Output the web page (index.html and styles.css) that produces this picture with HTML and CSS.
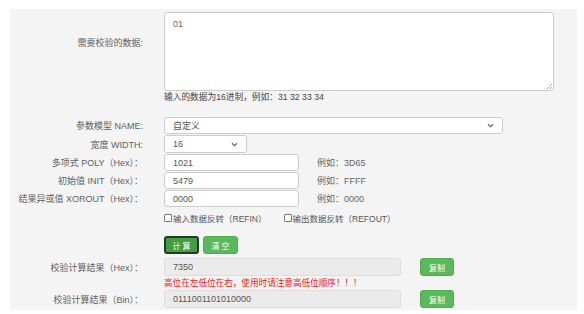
FILE: index.html
```html
<!DOCTYPE html>
<html lang="zh-CN">
<head>
    <meta charset="UTF-8">
    <title>CRC</title>
    <link rel="stylesheet" href="styles.css">
</head>
<body>
    <div class="panel">
        <div class="row row-data">
            <label class="lbl lbl-top">需要校验的数据:</label>
            <div class="field">
                <div class="textarea">01<span class="grip"></span></div>
                <div class="hint">输入的数据为16进制，例如：31 32 33 34</div>
            </div>
        </div>

        <div class="row row-name">
            <label class="lbl">参数模型 NAME:</label>
            <div class="select select-wide">自定义<svg width="7" height="5" viewBox="0 0 7 5"><path d="M1 1.2 L3.5 3.6 L6 1.2" fill="none" stroke="#666" stroke-width="1.2"/></svg></div>
        </div>
        <div class="row">
            <label class="lbl">宽度 WIDTH:</label>
            <div class="select select-small">16<svg width="7" height="5" viewBox="0 0 7 5"><path d="M1 1.2 L3.5 3.6 L6 1.2" fill="none" stroke="#666" stroke-width="1.2"/></svg></div>
        </div>
        <div class="row">
            <label class="lbl">多项式 POLY（Hex）：</label>
            <div class="input">1021</div>
            <span class="example">例如：3D65</span>
        </div>
        <div class="row">
            <label class="lbl">初始值 INIT（Hex）：</label>
            <div class="input">5479</div>
            <span class="example">例如：FFFF</span>
        </div>
        <div class="row">
            <label class="lbl">结果异或值 XOROUT（Hex）：</label>
            <div class="input">0000</div>
            <span class="example">例如：0000</span>
        </div>

        <div class="row row-checks">
            <span class="lbl"></span>
            <label class="check"><span class="box"></span>输入数据反转（REFIN）</label>
            <label class="check"><span class="box"></span>输出数据反转（REFOUT）</label>
        </div>

        <div class="row row-btns">
            <span class="lbl"></span>
            <button class="btn btn-active">计 算</button>
            <button class="btn">清 空</button>
        </div>

        <div class="row row-hex">
            <label class="lbl">校验计算结果（Hex）：</label>
            <div class="input result">7350</div>
            <button class="btn btn-copy">复制</button>
        </div>
        <div class="row row-warn">
            <span class="lbl"></span>
            <span class="warn">高位在左低位在右，使用时请注意高低位顺序！！！</span>
        </div>
        <div class="row row-bin">
            <label class="lbl">校验计算结果（Bin）：</label>
            <div class="input result">0111001101010000</div>
            <button class="btn btn-copy">复制</button>
        </div>
    </div>
</body>
</html>
```

FILE: styles.css
```css
*{
    margin: 0;
    padding: 0;
    box-sizing: border-box;
}
body{
    background-color: #fff;
    font-family: "Liberation Sans", "Noto Sans CJK SC", sans-serif;
    font-size: 9px;
    color: #555;
}
.panel{
    width: 567px;
    margin: 9px 0 0 10px;
    padding: 3px 0 2px 0;
    background-color: #f4f4f4;
}
.row{
    display: flex;
    align-items: center;
    margin-top: 1px;
}
.lbl{
    width: 154px;
    flex-shrink: 0;
    padding-right: 21px;
    text-align: right;
    color: #606060;
}
.lbl-top{
    align-self: flex-start;
    padding-top: 24px;
}
.row-data{
    margin-top: 0;
    align-items: flex-start;
}
.textarea{
    position: relative;
    width: 390px;
    height: 79px;
    padding: 5px 8px;
    background-color: #fff;
    border: 1px solid #ccc;
    border-radius: 3px;
    line-height: 12px;
    color: #666;
}
.grip{
    position: absolute;
    right: 1px;
    bottom: 1px;
    width: 5px;
    height: 5px;
    background: linear-gradient(135deg, transparent 45%, #aaa 45%, #aaa 55%, transparent 55%, transparent 75%, #aaa 75%, #aaa 85%, transparent 85%);
}
.hint{
    height: 12px;
    line-height: 12px;
    font-size: 8.7px;
    color: #444;
}
.row-name{
    margin-top: 14px;
}
.select, .input{
    display: flex;
    align-items: center;
    height: 17px;
    padding: 0 8px;
    background-color: #fff;
    border: 1px solid #ccc;
    border-radius: 3px;
    color: #555;
}
.select{
    justify-content: space-between;
}
.select-wide{
    width: 339px;
}
.select-small{
    width: 83px;
    height: 18px;
}
.input{
    width: 135px;
}
.example{
    margin-left: 18px;
    color: #666;
}
.row-checks{
    margin-top: 4px;
    height: 13px;
    font-size: 8.5px;
}
.check{
    display: flex;
    align-items: center;
    color: #555;
}
.check + .check{
    margin-left: 17px;
}
.box{
    width: 8px;
    height: 8px;
    margin-right: 1px;
    background-color: #fff;
    border: 1px solid #777;
    border-radius: 1px;
}
.row-btns{
    margin-top: 12px;
}
.btn{
    width: 35px;
    height: 18px;
    margin-right: 4px;
    border: 1px solid #4cae4c;
    border-radius: 3px;
    background-color: #5cb85c;
    color: #fff;
    font-family: inherit;
    font-size: 8px;
}
.btn-active{
    background-color: #449d44;
    border: 2px solid #1f3d1f;
}
.row-hex{
    margin-top: 4px;
}
.result{
    width: 237px;
    height: 18px;
    background-color: #ebebeb;
    border-color: #ddd;
}
.btn-copy{
    margin-left: 19px;
    width: 34px;
}
.row-warn{
    margin-top: 0;
    height: 12px;
}
.warn{
    color: #f0141e;
    font-size: 8.6px;
}
.row-bin{
    margin-top: 2px;
}
```
